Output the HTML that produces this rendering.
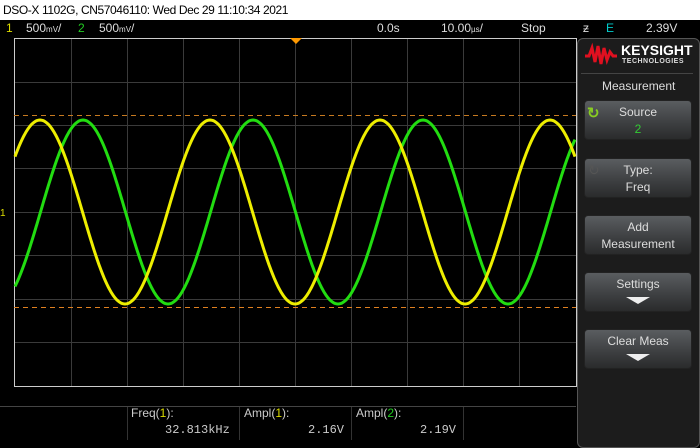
<!DOCTYPE html>
<html><head><meta charset="utf-8"><style>
body{margin:0;width:700px;height:440px;background:#000;overflow:hidden;position:relative;font-family:"Liberation Sans",sans-serif}
.t{position:absolute;white-space:nowrap}
.btn{position:absolute;left:584px;width:108px;height:40px;border-radius:4px;background:linear-gradient(#5a5d60,#3c3e40 60%,#2a2b2c);border:1px solid #222;color:#ddd;font-size:12px;text-align:center;line-height:17px;box-sizing:border-box;padding-top:3px}
.arr{display:block;margin:4px auto 0;width:0;height:0;border-left:12px solid transparent;border-right:12px solid transparent;border-top:7px solid #eee;position:relative}
</style></head><body>
<div style="position:absolute;left:0;top:0;width:700px;height:20px;background:#fff"></div>
<div class="t" style="left:3px;top:3px;font-size:12px;color:#000;letter-spacing:-0.4px">DSO-X 1102G, CN57046110: Wed Dec 29 11:10:34 2021</div>
<div class="t" style="left:6px;top:21px;font-size:12px;color:#dd0">1</div>
<div class="t" style="left:26px;top:21px;font-size:12px;color:#ddd">500<span style="font-size:8px">mV</span>/</div>
<div class="t" style="left:78px;top:21px;font-size:12px;color:#2c2">2</div>
<div class="t" style="left:99px;top:21px;font-size:12px;color:#ddd">500<span style="font-size:8px">mV</span>/</div>
<div class="t" style="left:377px;top:21px;font-size:12px;color:#ddd">0.0s</div>
<div class="t" style="left:441px;top:21px;font-size:12px;color:#ddd">10.00<span style="font-size:8px">µs</span>/</div>
<div class="t" style="left:521px;top:21px;font-size:12px;color:#ddd">Stop</div>
<div class="t" style="left:583px;top:21px;font-size:12px;color:#ddd">ƶ</div>
<div class="t" style="left:606px;top:21px;font-size:12px;color:#0cc">E</div>
<div class="t" style="left:646px;top:21px;font-size:12px;color:#ddd">2.39V</div>
<svg width="700" height="440" style="position:absolute;left:0;top:0">
<g stroke="#3a3a3a" stroke-width="1">
<line x1="71.5" y1="39" x2="71.5" y2="386"/><line x1="127.5" y1="39" x2="127.5" y2="386"/><line x1="183.5" y1="39" x2="183.5" y2="386"/><line x1="239.5" y1="39" x2="239.5" y2="386"/><line x1="351.5" y1="39" x2="351.5" y2="386"/><line x1="407.5" y1="39" x2="407.5" y2="386"/><line x1="463.5" y1="39" x2="463.5" y2="386"/><line x1="519.5" y1="39" x2="519.5" y2="386"/>
<line x1="14" y1="82.5" x2="576" y2="82.5"/><line x1="14" y1="125.5" x2="576" y2="125.5"/><line x1="14" y1="168.5" x2="576" y2="168.5"/><line x1="14" y1="212.5" x2="576" y2="212.5"/><line x1="14" y1="255.5" x2="576" y2="255.5"/><line x1="14" y1="299.5" x2="576" y2="299.5"/><line x1="14" y1="342.5" x2="576" y2="342.5"/>
<line x1="295.5" y1="39" x2="295.5" y2="386"/>
</g>
<rect x="14.5" y="38.5" width="562" height="348" fill="none" stroke="#ccc"/>
<line x1="14" y1="115.5" x2="576" y2="115.5" stroke="#c77a20" stroke-dasharray="5,4"/>
<line x1="14" y1="307.5" x2="576" y2="307.5" stroke="#e08020" stroke-dasharray="5,4"/>
<path id="g" fill="none" stroke="#22dd11" stroke-width="3"/>
<path id="y" fill="none" stroke="#eeee00" stroke-width="3"/>
<polygon points="290,38 302,38 296,44" fill="#f90"/>
<line x1="0" y1="406.5" x2="576" y2="406.5" stroke="#444"/>
<g stroke="#333"><line x1="127.5" y1="407" x2="127.5" y2="440"/><line x1="239.5" y1="407" x2="239.5" y2="440"/><line x1="351.5" y1="407" x2="351.5" y2="440"/><line x1="463.5" y1="407" x2="463.5" y2="440"/></g>
<text x="0" y="216" fill="#dd0" font-size="10" font-family="Liberation Sans">1</text>
</svg>
<div class="t" style="left:131px;top:406px;font-size:12px;color:#ccc">Freq(<span style="color:#dd0">1</span>):</div>
<div class="t" style="left:165px;top:423px;font-size:12px;color:#ccc;font-family:'Liberation Mono',monospace">32.813kHz</div>
<div class="t" style="left:244px;top:406px;font-size:12px;color:#ccc">Ampl(<span style="color:#dd0">1</span>):</div>
<div class="t" style="left:308px;top:423px;font-size:12px;color:#ccc;font-family:'Liberation Mono',monospace">2.16V</div>
<div class="t" style="left:356px;top:406px;font-size:12px;color:#ccc">Ampl(<span style="color:#2c2">2</span>):</div>
<div class="t" style="left:420px;top:423px;font-size:12px;color:#ccc;font-family:'Liberation Mono',monospace">2.19V</div>
<div style="position:absolute;left:577px;top:38px;width:123px;height:410px;background:#1c1c1c;border:1px solid #555;border-radius:6px;box-sizing:border-box"></div>
<svg style="position:absolute;left:584px;top:42px" width="34" height="26"><path d="M1 14 L5 14 L8 6 L11 20 L14 4 L17 22 L20 6 L23 18 L26 10 L29 14 L33 14" fill="none" stroke="#e01020" stroke-width="3"/></svg>
<div class="t" style="left:621px;top:42px;font-size:14px;font-weight:bold;color:#fff">KEYSIGHT</div>
<div class="t" style="left:622px;top:58px;font-size:7px;font-weight:bold;color:#ddd;letter-spacing:0.5px">TECHNOLOGIES</div>
<div style="position:absolute;left:581px;top:73px;width:112px;height:1px;background:#444"></div>
<div class="t" style="left:602px;top:79px;font-size:12px;color:#ddd">Measurement</div>
<div class="btn" style="top:100px">Source<br><span style="color:#3c3">2</span></div>
<div class="t" style="left:587px;top:104px;font-size:15px;color:#8c2;font-weight:bold">↻</div>
<div class="btn" style="top:158px">Type:<br>Freq</div>
<div class="t" style="left:588px;top:162px;font-size:14px;color:#555">↻</div>
<div class="btn" style="top:215px">Add<br>Measurement</div>
<div class="btn" style="top:272px">Settings<span class="arr"></span></div>
<div class="btn" style="top:329px">Clear Meas<span class="arr"></span></div>
<script>
function mk(ph){var d="";for(var x=15;x<=575;x+=1){var y=212-92*Math.cos(2*Math.PI*(x-ph)/170);d+=(x==15?"M":"L")+x+" "+y.toFixed(1)+" ";}return d;}
document.getElementById('y').setAttribute('d',mk(40));
document.getElementById('g').setAttribute('d',mk(83));
</script>
</body></html>
